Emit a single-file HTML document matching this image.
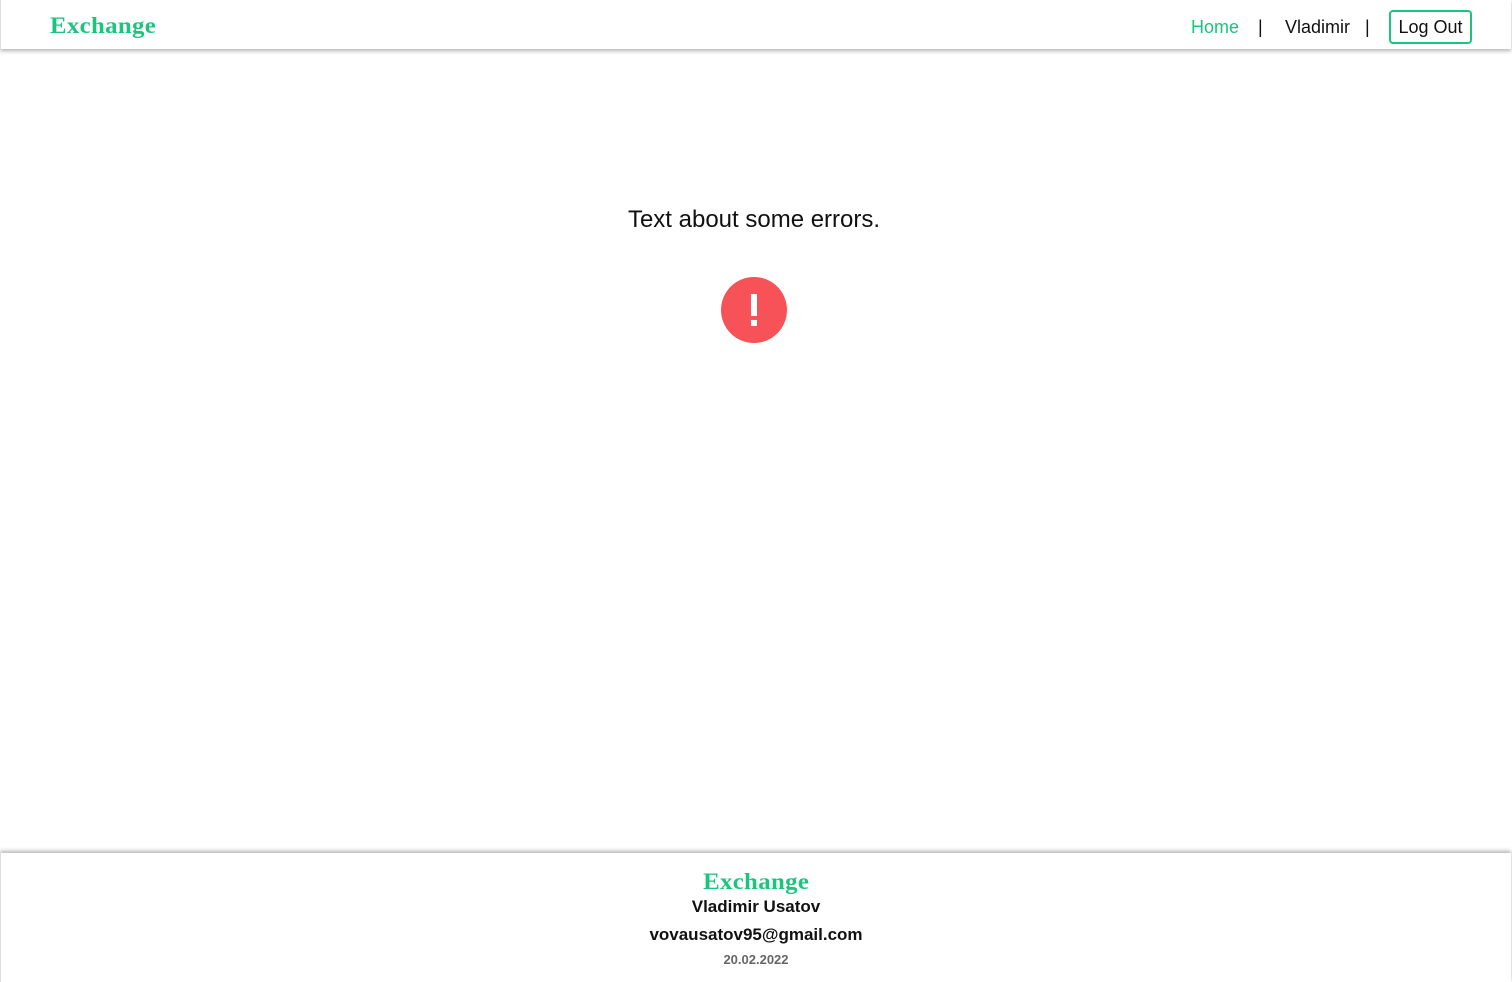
<!DOCTYPE html>
<html><head><style>
body{margin:0;width:1512px;height:982px;background:#fff;font-family:"Liberation Sans",sans-serif;position:relative;overflow:hidden}
.hdr{position:absolute;left:0;top:0;width:1510px;height:49px;border-left:1px solid #ddd;box-shadow:0 2px 4px rgba(0,0,0,.3);background:#fff}
.logo{font-family:"Liberation Serif",serif;font-weight:bold;color:#1cc47e;font-size:23px;letter-spacing:0.3px;display:inline-block;transform:scaleX(1.08)}
.nav{position:absolute;top:16px;font-size:18px;color:#111}
.btn{position:absolute;left:1389px;top:10px;width:78px;height:30px;border:2px solid #1cc47e;border-radius:4px;font-size:18px;text-align:center;line-height:31px;color:#111}
.ftr{position:absolute;left:0;top:853px;width:1510px;height:129px;border-left:1px solid #ddd;box-shadow:0 -2px 4px rgba(0,0,0,.3);background:#fff;text-align:center}
</style></head><body>
<div class="hdr">
<div class="logo" style="position:absolute;left:49px;top:13px;transform-origin:left">Exchange</div>
<div class="nav" style="left:1190px;top:17px;color:#1cc47e">Home</div>
<div class="nav" style="left:1257px;top:17px">|</div>
<div class="nav" style="left:1284px;top:17px">Vladimir</div>
<div class="nav" style="left:1364px;top:17px">|</div>
<div class="btn" style="left:1388px;width:79px">Log Out</div>
</div>
<div style="position:absolute;top:206px;left:0;width:1508px;text-align:center;font-size:24px;color:#111">Text about some errors.</div>
<div style="position:absolute;left:721px;top:277px;width:66px;height:66px;border-radius:50%;background:#f75258">
<div style="position:absolute;left:30px;top:17px;width:6px;height:22px;background:#fff"></div>
<div style="position:absolute;left:30px;top:43px;width:6px;height:6px;background:#fff"></div>
</div>
<div class="ftr">
<div style="margin-top:16px;height:26px;line-height:26px"><span class="logo" style="line-height:26px;vertical-align:top">Exchange</span></div>
<div style="font-weight:bold;font-size:17px;color:#111;line-height:24px">Vladimir Usatov</div>
<div style="font-weight:bold;font-size:17px;color:#111;line-height:32px">vovausatov95@gmail.com</div>
<div style="font-weight:bold;font-size:13px;color:#666;line-height:18px">20.02.2022</div>
</div>
</body></html>
